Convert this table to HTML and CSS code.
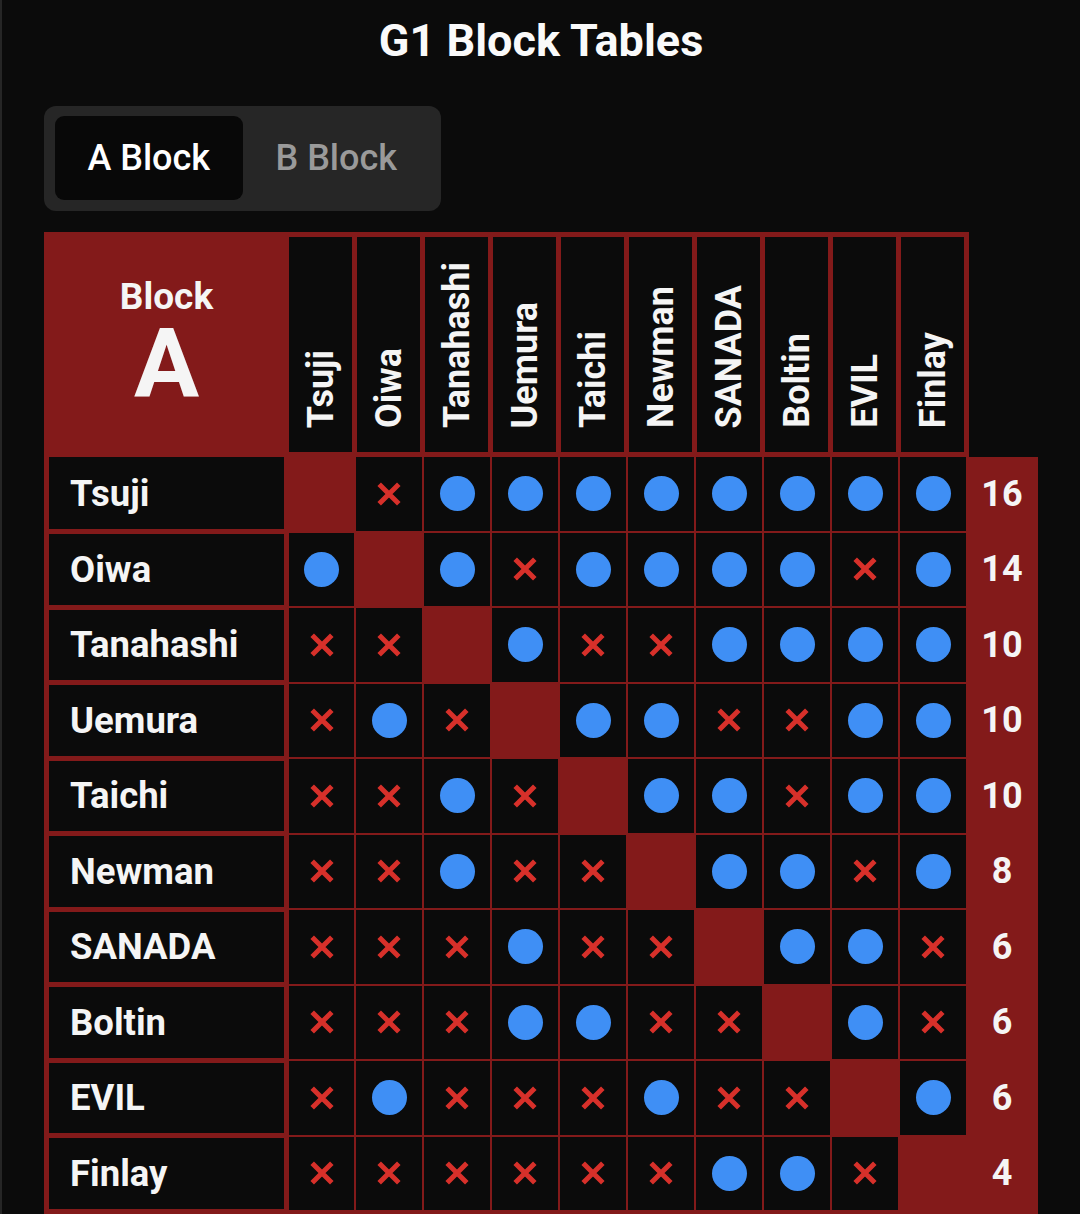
FILE: index.html
```html
<!DOCTYPE html>
<html lang="en">
<head>
<meta charset="utf-8">
<title>G1 Block Tables</title>
<link rel="stylesheet" href="styles.css">
</head>
<body>
<svg class="defs" aria-hidden="true"><symbol id="x" viewBox="0 0 24 24"><path d="M2.2 2.2L21.8 21.8M21.8 2.2L2.2 21.8"/></symbol></svg>
<div class="page">
  <h1 class="title">G1 Block Tables</h1>
  <div class="tabs">
    <div class="tab active">A Block</div>
    <div class="tab">B Block</div>
  </div>
  <div class="board">
    <div class="head">
      <div class="corner"><div class="corner-label">Block</div><div class="corner-letter">A</div></div>
      <div class="col-head"><span>Tsuji</span></div>
      <div class="col-head"><span>Oiwa</span></div>
      <div class="col-head"><span>Tanahashi</span></div>
      <div class="col-head"><span>Uemura</span></div>
      <div class="col-head"><span>Taichi</span></div>
      <div class="col-head"><span>Newman</span></div>
      <div class="col-head"><span>SANADA</span></div>
      <div class="col-head"><span>Boltin</span></div>
      <div class="col-head"><span>EVIL</span></div>
      <div class="col-head"><span>Finlay</span></div>
    </div>
    <div class="grid">
      <div class="name">Tsuji</div>
      <div class="self"></div>
      <div class="cell"><svg class="x"><use href="#x"/></svg></div>
      <div class="cell"><span class="dot"></span></div>
      <div class="cell"><span class="dot"></span></div>
      <div class="cell"><span class="dot"></span></div>
      <div class="cell"><span class="dot"></span></div>
      <div class="cell"><span class="dot"></span></div>
      <div class="cell"><span class="dot"></span></div>
      <div class="cell"><span class="dot"></span></div>
      <div class="cell"><span class="dot"></span></div>
      <div class="pts">16</div>

      <div class="name">Oiwa</div>
      <div class="cell"><span class="dot"></span></div>
      <div class="self"></div>
      <div class="cell"><span class="dot"></span></div>
      <div class="cell"><svg class="x"><use href="#x"/></svg></div>
      <div class="cell"><span class="dot"></span></div>
      <div class="cell"><span class="dot"></span></div>
      <div class="cell"><span class="dot"></span></div>
      <div class="cell"><span class="dot"></span></div>
      <div class="cell"><svg class="x"><use href="#x"/></svg></div>
      <div class="cell"><span class="dot"></span></div>
      <div class="pts">14</div>

      <div class="name">Tanahashi</div>
      <div class="cell"><svg class="x"><use href="#x"/></svg></div>
      <div class="cell"><svg class="x"><use href="#x"/></svg></div>
      <div class="self"></div>
      <div class="cell"><span class="dot"></span></div>
      <div class="cell"><svg class="x"><use href="#x"/></svg></div>
      <div class="cell"><svg class="x"><use href="#x"/></svg></div>
      <div class="cell"><span class="dot"></span></div>
      <div class="cell"><span class="dot"></span></div>
      <div class="cell"><span class="dot"></span></div>
      <div class="cell"><span class="dot"></span></div>
      <div class="pts">10</div>

      <div class="name">Uemura</div>
      <div class="cell"><svg class="x"><use href="#x"/></svg></div>
      <div class="cell"><span class="dot"></span></div>
      <div class="cell"><svg class="x"><use href="#x"/></svg></div>
      <div class="self"></div>
      <div class="cell"><span class="dot"></span></div>
      <div class="cell"><span class="dot"></span></div>
      <div class="cell"><svg class="x"><use href="#x"/></svg></div>
      <div class="cell"><svg class="x"><use href="#x"/></svg></div>
      <div class="cell"><span class="dot"></span></div>
      <div class="cell"><span class="dot"></span></div>
      <div class="pts">10</div>

      <div class="name">Taichi</div>
      <div class="cell"><svg class="x"><use href="#x"/></svg></div>
      <div class="cell"><svg class="x"><use href="#x"/></svg></div>
      <div class="cell"><span class="dot"></span></div>
      <div class="cell"><svg class="x"><use href="#x"/></svg></div>
      <div class="self"></div>
      <div class="cell"><span class="dot"></span></div>
      <div class="cell"><span class="dot"></span></div>
      <div class="cell"><svg class="x"><use href="#x"/></svg></div>
      <div class="cell"><span class="dot"></span></div>
      <div class="cell"><span class="dot"></span></div>
      <div class="pts">10</div>

      <div class="name">Newman</div>
      <div class="cell"><svg class="x"><use href="#x"/></svg></div>
      <div class="cell"><svg class="x"><use href="#x"/></svg></div>
      <div class="cell"><span class="dot"></span></div>
      <div class="cell"><svg class="x"><use href="#x"/></svg></div>
      <div class="cell"><svg class="x"><use href="#x"/></svg></div>
      <div class="self"></div>
      <div class="cell"><span class="dot"></span></div>
      <div class="cell"><span class="dot"></span></div>
      <div class="cell"><svg class="x"><use href="#x"/></svg></div>
      <div class="cell"><span class="dot"></span></div>
      <div class="pts">8</div>

      <div class="name">SANADA</div>
      <div class="cell"><svg class="x"><use href="#x"/></svg></div>
      <div class="cell"><svg class="x"><use href="#x"/></svg></div>
      <div class="cell"><svg class="x"><use href="#x"/></svg></div>
      <div class="cell"><span class="dot"></span></div>
      <div class="cell"><svg class="x"><use href="#x"/></svg></div>
      <div class="cell"><svg class="x"><use href="#x"/></svg></div>
      <div class="self"></div>
      <div class="cell"><span class="dot"></span></div>
      <div class="cell"><span class="dot"></span></div>
      <div class="cell"><svg class="x"><use href="#x"/></svg></div>
      <div class="pts">6</div>

      <div class="name">Boltin</div>
      <div class="cell"><svg class="x"><use href="#x"/></svg></div>
      <div class="cell"><svg class="x"><use href="#x"/></svg></div>
      <div class="cell"><svg class="x"><use href="#x"/></svg></div>
      <div class="cell"><span class="dot"></span></div>
      <div class="cell"><span class="dot"></span></div>
      <div class="cell"><svg class="x"><use href="#x"/></svg></div>
      <div class="cell"><svg class="x"><use href="#x"/></svg></div>
      <div class="self"></div>
      <div class="cell"><span class="dot"></span></div>
      <div class="cell"><svg class="x"><use href="#x"/></svg></div>
      <div class="pts">6</div>

      <div class="name">EVIL</div>
      <div class="cell"><svg class="x"><use href="#x"/></svg></div>
      <div class="cell"><span class="dot"></span></div>
      <div class="cell"><svg class="x"><use href="#x"/></svg></div>
      <div class="cell"><svg class="x"><use href="#x"/></svg></div>
      <div class="cell"><svg class="x"><use href="#x"/></svg></div>
      <div class="cell"><span class="dot"></span></div>
      <div class="cell"><svg class="x"><use href="#x"/></svg></div>
      <div class="cell"><svg class="x"><use href="#x"/></svg></div>
      <div class="self"></div>
      <div class="cell"><span class="dot"></span></div>
      <div class="pts">6</div>

      <div class="name">Finlay</div>
      <div class="cell"><svg class="x"><use href="#x"/></svg></div>
      <div class="cell"><svg class="x"><use href="#x"/></svg></div>
      <div class="cell"><svg class="x"><use href="#x"/></svg></div>
      <div class="cell"><svg class="x"><use href="#x"/></svg></div>
      <div class="cell"><svg class="x"><use href="#x"/></svg></div>
      <div class="cell"><svg class="x"><use href="#x"/></svg></div>
      <div class="cell"><span class="dot"></span></div>
      <div class="cell"><span class="dot"></span></div>
      <div class="cell"><svg class="x"><use href="#x"/></svg></div>
      <div class="self"></div>
      <div class="pts">4</div>
    </div>
  </div>
</div>
</body>
</html>
```
FILE: styles.css
```css
html {
  overflow: hidden;
  background: #0b0b0b;
}

body {
  margin: 0;
  min-height: 100vh;
  background: #0b0b0b;
  border-left: 2px solid #262626;
  color: #f5f5f5;
  font-family: Roboto, "Noto Sans", "Liberation Sans", sans-serif;
}

.defs {
  display: none;
}

.page {
  padding: 0 42px;
}

.title {
  margin: 0 0 39px;
  padding-top: 15px;
  font-size: 45px;
  line-height: 52px;
  font-weight: 700;
  text-align: center;
  color: #fafafa;
}

.tabs {
  display: inline-flex;
  padding: 10px 11px 11px;
  background: #262626;
  border-radius: 12px;
  margin-bottom: 21px;
}

.tab {
  width: 187.5px;
  height: 84px;
  display: flex;
  align-items: center;
  justify-content: center;
  font-size: 36px;
  font-weight: 500;
  color: #9a9a9a;
  border-radius: 9px;
}

.tab.active {
  background: #080808;
  color: #ffffff;
}

.board {
  width: 994px;
}

.head {
  display: flex;
  width: 925px;
  height: 225px;
  box-sizing: border-box;
  padding: 5px 5px 5px 0;
  background: #831a1a;
}

.corner {
  width: 245px;
  flex: none;
  display: flex;
  flex-direction: column;
  align-items: center;
  justify-content: center;
  font-weight: 700;
  color: #f5f5f5;
}

.corner-label {
  font-size: 37px;
  line-height: 36px;
}

.corner-letter {
  font-size: 97px;
  line-height: 96px;
}

.col-head {
  width: 63px;
  flex: none;
  box-sizing: border-box;
  padding-bottom: 24px;
  background: #0b0b0b;
  display: flex;
  flex-direction: column;
  justify-content: flex-end;
  align-items: center;
}

.col-head + .col-head {
  margin-left: 5px;
}

.col-head span {
  writing-mode: vertical-rl;
  transform: rotate(180deg);
  font-size: 36px;
  font-weight: 700;
  white-space: nowrap;
}

.grid {
  display: grid;
  grid-template-columns: 243px 65px repeat(9, 66px) 70px;
  grid-auto-rows: 73.5px;
  gap: 2px;
  padding-bottom: 5px;
  background: #831a1a;
}

.name {
  margin: 1.5px 3px 1.5px 5px;
  padding-left: 21px;
  background: #0b0b0b;
  display: flex;
  align-items: center;
  font-size: 36.5px;
  font-weight: 700;
}

.name:first-child {
  margin-top: 0;
}

.cell {
  background: #0b0b0b;
  display: flex;
  align-items: center;
  justify-content: center;
}

.dot {
  width: 35px;
  height: 35px;
  border-radius: 50%;
  background: #3f8ff5;
}

.x {
  width: 24px;
  height: 24px;
  fill: none;
  stroke: #d7302a;
  stroke-width: 5;
}

.pts {
  margin-left: -2px;
  display: flex;
  align-items: center;
  justify-content: center;
  font-size: 36px;
  font-weight: 700;
}
```
